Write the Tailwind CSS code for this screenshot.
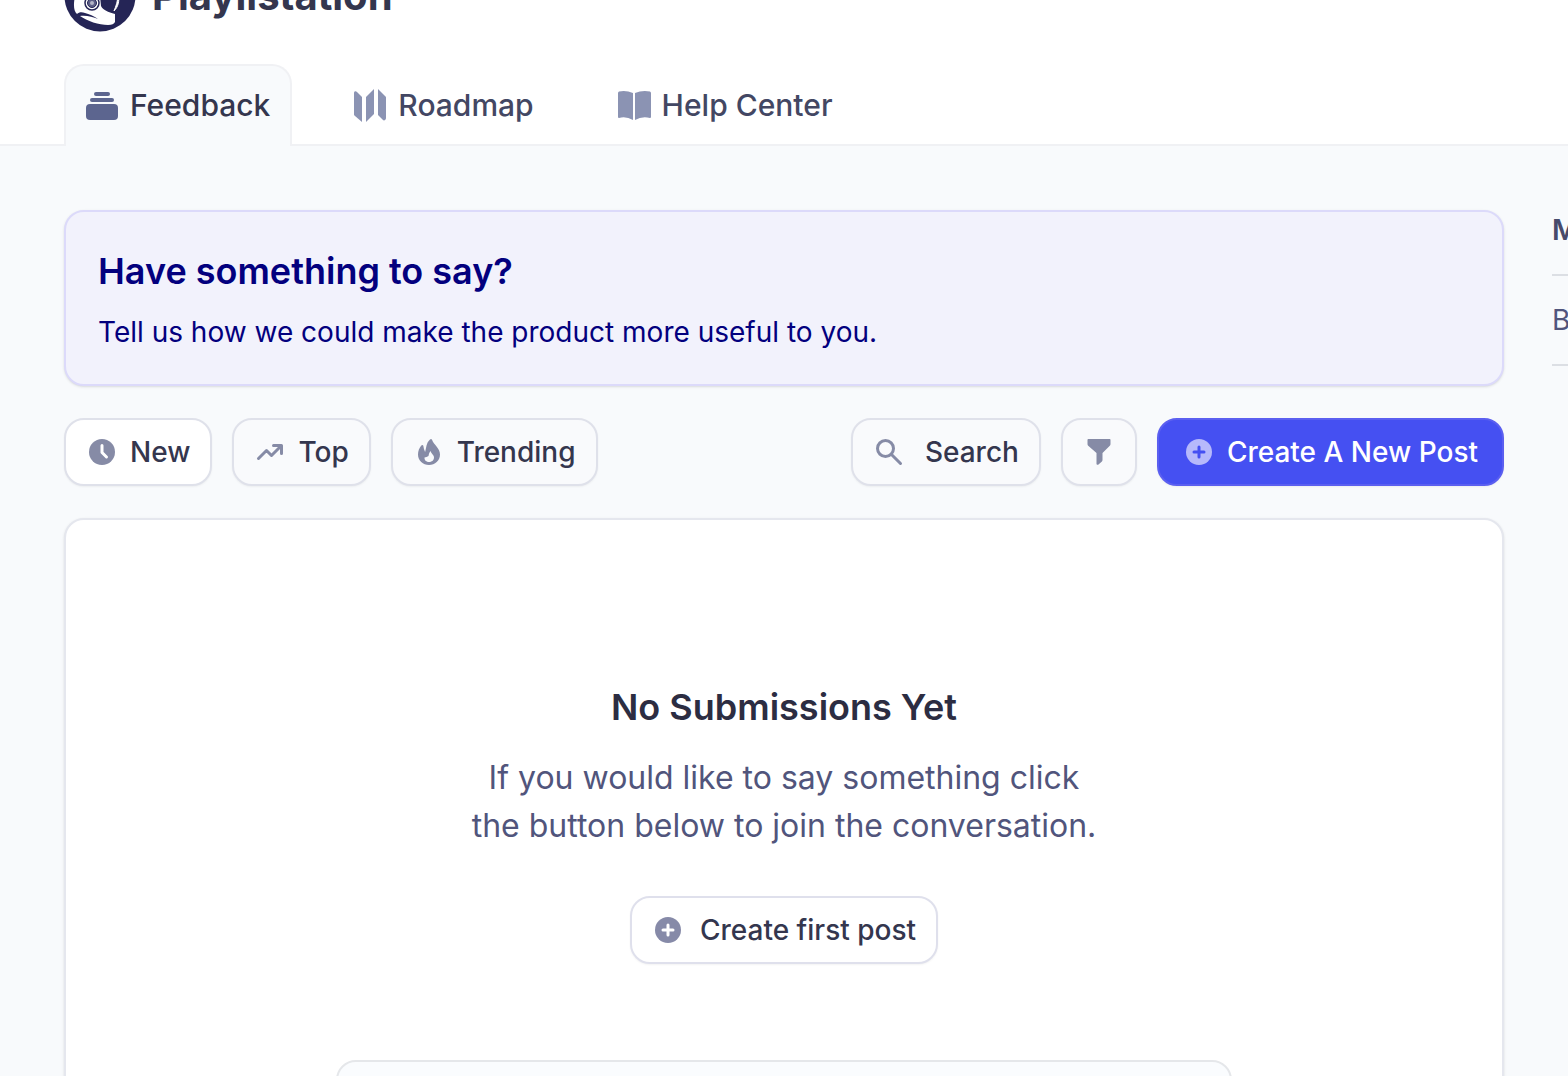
<!DOCTYPE html>
<html lang="en">
<head>
    <meta charset="UTF-8">
    <meta name="viewport" content="width=device-width, initial-scale=1.0">
    <title>Playlistation</title>
    <script src="https://cdn.jsdelivr.net/npm/@tailwindcss/browser@4"></script>
</head>
<body class="min-h-screen overflow-hidden bg-[#f8fafc] font-['Inter',sans-serif] text-[#34364e]">
    <!-- Header -->
    <header class="-mt-10 border-b-2 border-[#f0f1f4] bg-white px-16">
        <div class="flex h-[72px] items-center gap-4">
            <svg class="size-[72px] shrink-0" viewBox="0 0 72 72" aria-hidden="true">
                <circle cx="36" cy="36" r="35.500" fill="#252556"/>
                <path d="M11 36C9 46 10 51 13 54c2-2 5-2 8-1 4 1 9 3 13 6-5-2-12-4-18-3 7 5 19 9 28 9 4 0 6-1 7-3V54c-7-2-12-4-14-8l-1-10z" fill="#fff"/>
                <circle cx="28" cy="43" r="7" fill="#fff" stroke="#252556" stroke-width="1.500"/>
                <circle cx="28" cy="43" r="4.500" fill="#5c5e86" stroke="#252556"/>
                <circle cx="28" cy="43" r="2" fill="#b4b5c8"/>
                <path d="M54 34c2 7 0 13-4 17 2-5 4-10 4-17z" fill="#fff" stroke="#fff"/>
            </svg>
            <h1 class="text-[40px] leading-[48px] font-bold">Playlistation</h1>
        </div>
        <nav class="mt-8 -mb-[2px] flex gap-10 text-[30px] leading-[40px] font-medium text-[#434763]">
            <a href="#" class="flex h-[82px] items-center gap-3 rounded-t-[20px] border-2 border-b-0 border-[#f0f1f4] bg-[#f8fafc] px-5 pb-[2px] text-[#34364e]">
                <svg class="size-8" viewBox="0 0 32 32" fill="#5c658f">
                    <rect x="8" y="3" width="16" height="4" rx="2"/>
                    <rect x="4" y="9" width="24" height="4" rx="2"/>
                    <rect x="0" y="15" width="32" height="16" rx="4"/>
                </svg>
                Feedback
            </a>
            <a href="#" class="flex h-[82px] items-center gap-3 border-2 border-b-0 border-transparent px-5 pb-[2px]">
                <svg class="size-8 overflow-visible" viewBox="0 0 32 32" fill="#8b93b3">
                    <path d="M0 4c0-2 2-2 3-1l5 5v25l-7-6c-1-1-1-1-1-2z"/>
                    <path d="M12 8l8-8v25l-8 8z"/>
                    <path d="M24 0l7 7c1 1 1 1 1 2v20c0 2-2 3-3 2l-5-5z"/>
                </svg>
                Roadmap
            </a>
            <a href="#" class="flex h-[82px] items-center gap-3 border-2 border-b-0 border-transparent px-5 pb-[2px]">
                <svg class="size-8 overflow-visible" viewBox="0 0 32 32" fill="#8b93b3">
                    <path d="M0 4q0-1 1-1.500Q8 1 15 4v27Q8 27 1 29q-1 0-1-1z"/>
                    <path d="M17 4Q24 1 32 2.500q1 .5 1 1.500v24q0 1-1 1Q24 27 17 31z"/>
                </svg>
                Help Center
            </a>
        </nav>
    </header>

    <div class="flex gap-12 pt-16 pl-16">
        <main class="min-w-0 flex-1">
            <section class="rounded-[20px] border-2 border-[#dcdafa] bg-[#f2f2fc] p-8 shadow-sm">
                <h2 class="text-[36px] leading-[54px] font-semibold text-[#03007e]">Have something to say?</h2>
                <p class="mt-[14px] text-[28px] leading-[40px] text-[#03007e]">Tell us how we could make the product more useful to you.</p>
            </section>

            <!-- Toolbar -->
            <div class="mt-8 flex justify-between text-[28px] leading-[40px] font-medium">
                <div class="flex gap-5">
                    <button class="flex h-[68px] items-center gap-3 rounded-[20px] border-2 border-[#dfe1ea] bg-white px-5 shadow-xs">
                        <svg class="size-8" viewBox="0 0 32 32"><circle cx="16" cy="16" r="13" fill="#868ba6"/><path d="M16 9.500v7l4.500 4.500" fill="none" stroke="#fff" stroke-width="3" stroke-linecap="round" stroke-linejoin="round"/></svg>
                        New
                    </button>
                    <button class="flex h-[68px] items-center gap-3 rounded-[20px] border-2 border-[#dfe1ea] bg-[#f9fafc] px-5 shadow-xs">
                        <svg class="size-8" viewBox="0 0 32 32" fill="none" stroke="#868ba6" stroke-width="3" stroke-linecap="round" stroke-linejoin="round"><path d="M4.500 22.500l8-8 5 5L27 10M19.500 9.500h8v8"/></svg>
                        Top
                    </button>
                    <button class="flex h-[68px] items-center gap-3 rounded-[20px] border-2 border-[#dfe1ea] bg-[#f9fafc] px-5 shadow-xs">
                        <svg class="size-8" viewBox="0 0 32 32"><path fill="#868ba6" fill-rule="evenodd" d="M17 3.500c.8-.8 1.500-.7 2 .2C21 9 27 12 27 18.500 27 24.500 22 29 16 29S5 24.500 5 18.500c0-3.700 1.300-6.500 3.300-9 .7-.9 1.700-.8 2 .2.300 2 .9 4.400 1.800 6.300C13.500 12 13 7 17 3.500zM17.500 15c-1.300 1.500-1.500 3-2 5-1.200 1-2.700 1-4 1.500-.5 6 9.500 6 9.500 0 0-2.500-2.500-3.500-3.500-6.500z"/></svg>
                        Trending
                    </button>
                </div>
                <div class="flex gap-5">
                    <button class="flex h-[68px] items-center gap-5 rounded-[20px] border-2 border-[#dfe1ea] bg-[#f9fafc] px-5 shadow-xs">
                        <svg class="size-8" viewBox="0 0 32 32" fill="none" stroke="#868ba6" stroke-width="3" stroke-linecap="round"><circle cx="12.500" cy="12.500" r="8"/><path d="M18.500 18.500l9 9"/></svg>
                        Search
                    </button>
                    <button aria-label="Filter" class="flex h-[68px] items-center rounded-[20px] border-2 border-[#dfe1ea] bg-[#f9fafc] px-5 shadow-xs">
                        <svg class="size-8" viewBox="0 0 32 32"><path fill="#868ba6" d="M5.500 3h21c.6 0 1 .4 1 1v4c0 .7-.2 1.200-.7 1.700L19.500 17v7c0 .6-.2 1.100-.6 1.500L15.500 28.500c-.9.700-2 .2-2-.8V17L5.200 9.700C4.700 9.200 4.500 8.700 4.500 8V4c0-.6.4-1 1-1z"/></svg>
                    </button>
                    <button class="flex h-[68px] items-center gap-3 rounded-[20px] border-2 border-[#5b5ff0] bg-[#4550f2] px-6 text-white shadow-xs">
                        <svg class="size-8" viewBox="0 0 32 32"><circle cx="16" cy="16" r="13" fill="#b6b9fb"/><path d="M16 11v10M11 16h10" stroke="#4550f2" stroke-width="3" stroke-linecap="round"/></svg>
                        Create A New Post
                    </button>
                </div>
            </div>

            <!-- Empty state -->
            <section class="mt-8 flex flex-col items-center rounded-[20px] border-2 border-[#e5e7ee] bg-white pt-40 pb-16 shadow-sm">
                <h2 class="text-[36px] leading-[54px] font-semibold text-[#2c2d42]">No Submissions Yet</h2>
                <p class="mt-5 text-center text-[32px] leading-[48px] text-[#51557c]">If you would like to say something click<br>the button below to join the conversation.</p>
                <button class="mt-[46px] flex h-[68px] items-center gap-4 rounded-[20px] border-2 border-[#dfe0ec] bg-white px-5 text-[28px] leading-[40px] font-medium shadow-xs">
                    <svg class="size-8" viewBox="0 0 32 32"><circle cx="16" cy="16" r="13" fill="#868aa8"/><path d="M16 11v10M11 16h10" stroke="#fff" stroke-width="3" stroke-linecap="round"/></svg>
                    Create first post
                </button>
                <div class="mt-24 h-40 w-full max-w-[896px] rounded-[20px] border-2 border-[#e5e7ea] bg-[#fafcfe]"></div>
            </section>
        </main>

        <aside class="w-4 shrink-0 overflow-hidden text-[28px] leading-[40px] text-[#51557c]">
            <h3 class="border-b-2 border-[#dcdfe4] pb-6 font-semibold text-[#474a6b]">M</h3>
            <p class="border-b-2 border-[#dcdfe4] py-6">B</p>
        </aside>
    </div>
</body>
</html>
